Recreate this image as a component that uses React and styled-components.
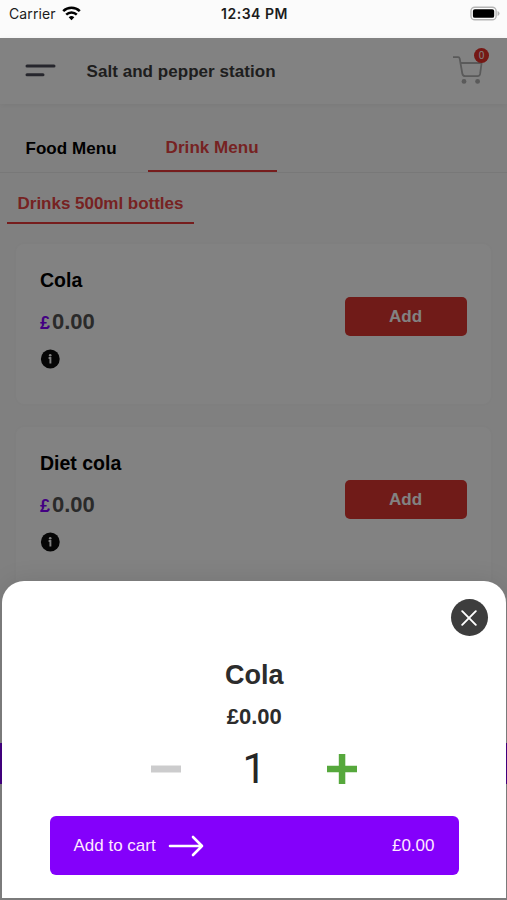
import styled, { createGlobalStyle } from "styled-components";

const GlobalStyle = createGlobalStyle`
  * {
    box-sizing: border-box;
  }

  body {
    margin: 0;
    font-family: "Liberation Sans", Arial, sans-serif;
  }

  button {
    font-family: inherit;
    border: none;
    padding: 0;
    cursor: pointer;
  }

  svg {
    display: block;
  }
`;

const Phone = styled.div`
  position: relative;
  display: flex;
  flex-direction: column;
  width: 507px;
  height: 900px;
  overflow: hidden;
  background: #fcfcfc;
`;

const StatusBar = styled.div`
  display: grid;
  grid-template-columns: 1fr auto 1fr;
  align-items: center;
  flex: none;
  height: 38px;
  padding: 0 7px 11px 9px;
  background: #fbfbfb;
  color: #1c1c1c;
  font-family: Inter, sans-serif;
  font-size: 14px;
`;

const Carrier = styled.div`
  display: flex;
  align-items: center;
  gap: 6px;
  letter-spacing: 0.1px;
`;

const Clock = styled.div`
  font-size: 14px;
  font-weight: 600;
  letter-spacing: 0.5px;
`;

const Battery = styled.svg`
  justify-self: end;
`;

const Screen = styled.div`
  position: relative;
  display: flex;
  flex-direction: column;
  flex: 1;
`;

const Header = styled.header`
  display: flex;
  align-items: center;
  height: 66px;
  padding: 0 18px 0 25px;
  background: #ffffff;
  box-shadow: 0 1px 6px rgba(0, 0, 0, 0.06);
`;

const RestaurantName = styled.h1`
  flex: 1;
  margin: 1px 0 0 30.5px;
  color: #3c3c3c;
  font-size: 17px;
  letter-spacing: 0.05px;
`;

const Cart = styled.div`
  position: relative;
  width: 36px;
  height: 48px;
  padding-top: 9px;
`;

const CartBadge = styled.span`
  position: absolute;
  top: 1px;
  right: 0;
  display: flex;
  align-items: center;
  justify-content: center;
  width: 15px;
  height: 15px;
  border-radius: 50%;
  background: #e52f28;
  color: #ffffff;
  font-size: 10px;
`;

const Tabs = styled.nav`
  display: flex;
  align-items: flex-end;
  height: 69px;
  padding-left: 7px;
  border-bottom: 1px solid #ececec;
`;

const Tab = styled.button`
  height: 49px;
  padding: ${props => (props.$active ? "2px 18px 0" : "4px 18px 0 18.5px")};
  margin-right: ${props => (props.$active ? "0" : "13px")};
  background: none;
  border-bottom: 2px solid ${props => (props.$active ? "#e83a3a" : "transparent")};
  color: ${props => (props.$active ? "#e84444" : "#000000")};
  font-size: 17px;
  font-weight: bold;
  letter-spacing: 0.05px;
`;

const SubTabs = styled.nav`
  display: flex;
  height: 51px;
  padding-left: 7px;
`;

const SubTab = styled.button`
  width: 187px;
  padding-top: 13px;
  background: none;
  border-bottom: 2px solid #e83a3a;
  color: #e84444;
  font-size: 17px;
  font-weight: bold;
  letter-spacing: -0.02px;
`;

const DrinkList = styled.div`
  display: flex;
  flex-direction: column;
  flex: 1;
  gap: 23px;
  padding: 20px 16px 0;
`;

const DrinkCard = styled.article`
  display: flex;
  align-items: center;
  justify-content: space-between;
  height: 160px;
  padding: 0 24px;
  border-radius: 8px;
  background: #ffffff;
  box-shadow: 0 0 6px rgba(0, 0, 0, 0.03);
`;

const DrinkInfo = styled.div`
  display: flex;
  flex-direction: column;
  align-items: flex-start;
  padding-bottom: 12px;
`;

const DrinkName = styled.h2`
  margin: 0;
  color: #000000;
  font-size: 19.5px;
  line-height: 24px;
`;

const DrinkPrice = styled.div`
  margin: 17px 0 13px;
  color: #545454;
  font-size: 22px;
  font-weight: bold;
  line-height: 26px;

  span {
    margin-right: 2px;
    color: #8400ff;
    font-size: 18px;
  }
`;

const AddButton = styled.button`
  width: 122px;
  height: 39px;
  margin: -15px 0.5px 0 0;
  padding-top: 1px;
  border-radius: 5px;
  background: #dc3530;
  color: #ffffff;
  font-size: 17px;
  font-weight: bold;
`;

const BottomBar = styled.div`
  height: 41px;
  margin-bottom: 116px;
  background: #8400ff;
`;

const Overlay = styled.div`
  position: absolute;
  inset: 0;
  display: flex;
  flex-direction: column;
  justify-content: flex-end;
  padding: 0 1.5px 2px 2px;
  background: rgba(0, 0, 0, 0.49);
`;

const Sheet = styled.section`
  position: relative;
  display: flex;
  flex-direction: column;
  align-items: center;
  height: 317px;
  padding: 78px 46.5px 0 47.5px;
  border-radius: 22px 22px 0 0;
  background: #ffffff;
  box-shadow: 0 0 24px rgba(0, 0, 0, 0.1);
`;

const CloseButton = styled.button`
  position: absolute;
  top: 18px;
  right: 18px;
  display: flex;
  align-items: center;
  justify-content: center;
  width: 37px;
  height: 37px;
  border-radius: 50%;
  background: #3d3d3d;
`;

const SheetTitle = styled.h2`
  margin: 0;
  color: #2c2c2c;
  font-size: 27px;
  line-height: 32px;
`;

const SheetPrice = styled.div`
  margin-top: 13px;
  color: #2c2c2c;
  font-size: 22px;
  font-weight: bold;
  line-height: 26px;
`;

const Stepper = styled.div`
  display: grid;
  grid-template-columns: 32px 144px 32px;
  align-items: center;
  justify-items: center;
  height: 48px;
  margin-top: 15px;
`;

const StepButton = styled.button`
  background: none;
`;

const Quantity = styled.span`
  color: #262626;
  font-family: Roboto, sans-serif;
  font-size: 42px;
  line-height: 48px;
`;

const AddToCart = styled.button`
  display: flex;
  align-items: center;
  width: 100%;
  height: 59px;
  margin-top: 22.5px;
  padding: 1px 24.5px 0 24px;
  border-radius: 6px;
  background: #8400fb;
  color: #ffe9ff;
  font-size: 17px;

  svg {
    margin: 0 auto 0 12px;
  }
`;

const WifiIcon = () => (
  <svg width="19" height="15" viewBox="0 0 19 15" fill="none" stroke="#000" strokeWidth="2.5">
    <path d="M1.2 5.2a11.8 11.8 0 0 1 16.6 0" />
    <path d="M4.2 8.6a7.6 7.6 0 0 1 10.6 0" />
    <path d="M9.5 14.2 6.7 11.3a4 4 0 0 1 5.6 0Z" fill="#000" stroke="none" />
  </svg>
);

const MenuIcon = () => (
  <svg width="31" height="14" viewBox="0 0 31 14" stroke="#4c4c58" strokeWidth="3" strokeLinecap="round">
    <path d="M2 2h27M2 10.7h16" />
  </svg>
);

const CartIcon = () => (
  <svg width="30" height="29" viewBox="0 0 30 29" fill="none" stroke="#b0b0b0" strokeWidth="1.8">
    <path d="M0 1.2h5.2q1.2 0 1.5 1.5L9.3 17.5q.5 2.7 3 2.7h12.2q2.2 0 2.6-2.3L28.6 7H8" strokeLinejoin="round" />
    <circle cx="11" cy="25.4" r="2.4" fill="#b0b0b0" stroke="none" />
    <circle cx="24.6" cy="25.4" r="2.4" fill="#b0b0b0" stroke="none" />
  </svg>
);

const InfoIcon = () => (
  <svg width="20" height="20" viewBox="0 0 20 20">
    <circle cx="10.3" cy="10" r="9.4" fill="#0c0c0c" />
    <circle cx="10.2" cy="6.2" r="1.3" fill="#fff" />
    <path d="M8.6 9h1.8v5.6" fill="none" stroke="#fff" strokeWidth="1.9" />
  </svg>
);

const drinks = [
  { name: "Cola", price: "0.00" },
  { name: "Diet cola", price: "0.00" },
];

const Drink = ({ name, price }) => {
  return (
    <DrinkCard>
      <DrinkInfo>
        <DrinkName>{name}</DrinkName>
        <DrinkPrice><span>£</span>{price}</DrinkPrice>
        <InfoIcon />
      </DrinkInfo>
      <AddButton>Add</AddButton>
    </DrinkCard>
  );
};

const ItemSheet = () => {
  return (
    <Sheet>
      <CloseButton aria-label="Close">
        <svg width="16" height="16" viewBox="0 0 16 16" stroke="#fff" strokeWidth="1.9" strokeLinecap="round">
          <path d="M1.2 1.2l13.6 13.6M14.8 1.2 1.2 14.8" />
        </svg>
      </CloseButton>
      <SheetTitle>Cola</SheetTitle>
      <SheetPrice>£0.00</SheetPrice>
      <Stepper>
        <StepButton aria-label="Less">
          <svg width="30" height="30" viewBox="0 0 30 30">
            <path d="M0 11.5h30v7H0z" fill="#cccccd" />
          </svg>
        </StepButton>
        <Quantity>1</Quantity>
        <StepButton aria-label="More">
          <svg width="30" height="30" viewBox="0 0 30 30">
            <path d="M11.8 0h6.5v11.8H30v6.5H18.3V30h-6.5V18.3H0v-6.5h11.8z" fill="#56a83c" />
          </svg>
        </StepButton>
      </Stepper>
      <AddToCart>
        Add to cart
        <svg width="36" height="22" viewBox="0 0 36 22" fill="none" stroke="#fff" strokeWidth="2.6" strokeLinecap="round" strokeLinejoin="round">
          <path d="M2 11h32M25 2l9 9-9 9" />
        </svg>
        <span>£0.00</span>
      </AddToCart>
    </Sheet>
  );
};

const App = () => {
  return (
    <Phone>
      <GlobalStyle />
      <StatusBar>
        <Carrier>
          Carrier
          <WifiIcon />
        </Carrier>
        <Clock>12:34 PM</Clock>
        <Battery width="30" height="15" viewBox="0 0 31 15">
          <rect x="1" y="1" width="26" height="13" rx="4" fill="#fff" stroke="#b5b5b5" strokeWidth="1.4" />
          <rect x="3" y="3" width="22" height="9" rx="2" fill="#000" />
          <path d="M28.5 5q2 .8 2 2.5t-2 2.5z" fill="#b5b5b5" />
        </Battery>
      </StatusBar>
      <Screen>
        <Header>
          <MenuIcon />
          <RestaurantName>Salt and pepper station</RestaurantName>
          <Cart>
            <CartIcon />
            <CartBadge>0</CartBadge>
          </Cart>
        </Header>
        <Tabs>
          <Tab>Food Menu</Tab>
          <Tab $active>Drink Menu</Tab>
        </Tabs>
        <SubTabs>
          <SubTab>Drinks 500ml bottles</SubTab>
        </SubTabs>
        <DrinkList>
          {drinks.map(drink => (
            <Drink key={drink.name} {...drink} />
          ))}
        </DrinkList>
        <BottomBar />
        <Overlay>
          <ItemSheet />
        </Overlay>
      </Screen>
    </Phone>
  );
};

export default App;
